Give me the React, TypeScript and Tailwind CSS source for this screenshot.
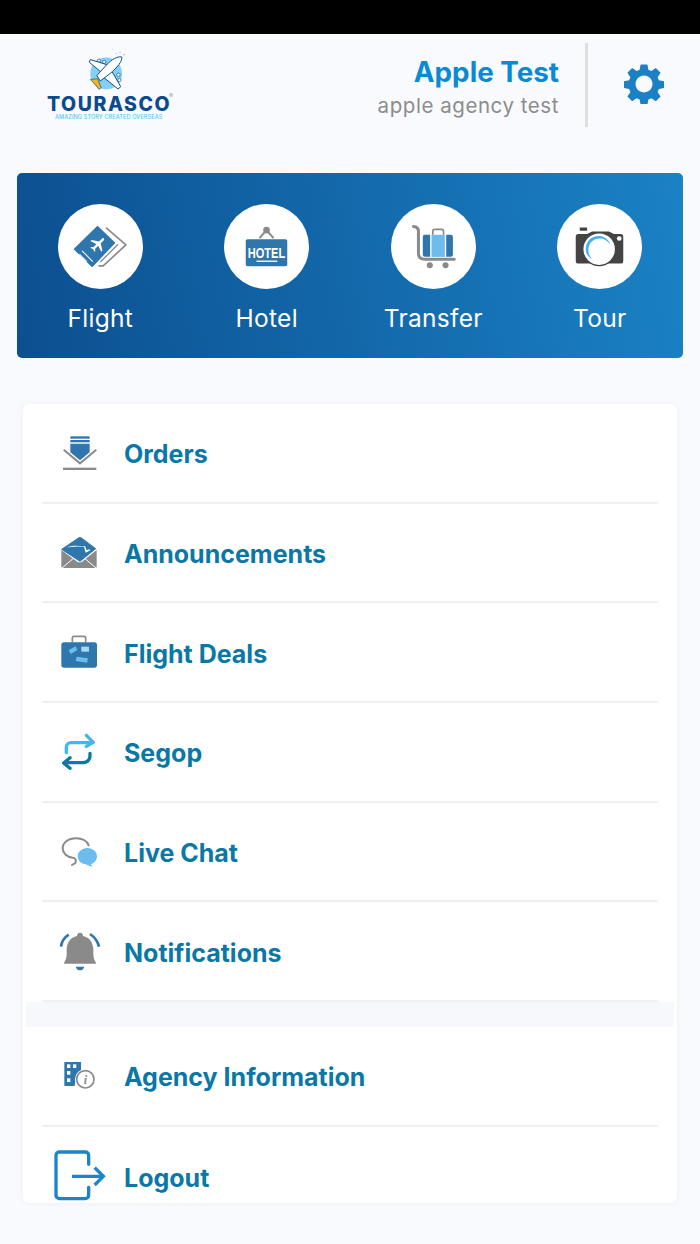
import React from "react";

const PLANE = "M21 16v-2l-8-5V3.5c0-.83-.67-1.5-1.5-1.5S10 2.67 10 3.5V9l-8 5v2l8-2.5V19l-2 1.5V22l3.5-1 3.5 1v-1.5L13 19v-5.5l8 2.5z";
const BLUE = "#2f76ad";
const GRAY = "#8a8a8a";
const SKY = "#6dbcee";

function Logo() {
  const n = "#0c4f8c";
  return (
    <div className="flex flex-col items-start w-[130px]">
      <svg viewBox="260 145 130 130" className="w-[43px] h-[43px] ml-[41px] mt-[14px]">
        <circle cx="318" cy="222" r="48" fill="#84cff6" />
        <g fill="#9db7c9">
          <circle cx="338" cy="150" r="1.5" /><circle cx="348" cy="162" r="2" /><circle cx="360" cy="158" r="2" /><circle cx="372" cy="165" r="2.5" /><circle cx="376" cy="150" r="1" />
        </g>
        <circle cx="296" cy="183" r="5" fill="#fff" stroke={n} strokeWidth="2" />
        <circle cx="312" cy="187" r="5" fill="#fff" stroke={n} strokeWidth="2" />
        <circle cx="355" cy="226" r="5" fill="#fff" stroke={n} strokeWidth="2" />
        <circle cx="358" cy="242" r="5" fill="#fff" stroke={n} strokeWidth="2" />
        <path d="M325 197L270 180l-3 8 38 32zM335 215l27 47-8 7-46-37z" fill="#fff" stroke={n} strokeWidth="3" strokeLinejoin="round" />
        <path d="M270 240l22-2 11 27-7 5-11-14z" fill="#f6b31a" stroke={n} strokeWidth="2" strokeLinejoin="round" />
        <path d="M365 172c-15-2-30 8-45 23l-30 33 10 17 30-23c20-17 38-37 35-50z" fill="#fff" stroke={n} strokeWidth="3" strokeLinejoin="round" />
      </svg>
      <div className="relative ml-[1px] mt-[5px] text-[19.5px] leading-[16px] font-extrabold tracking-[1.55px] text-[#0b4b8c]">
        TOURASCO
        <span className="absolute left-[122px] top-[-3px] text-[6px] leading-[6px] font-normal tracking-normal text-[#8fa5b8]">®</span>
      </div>
      <div className="ml-[9px] mt-[2px] text-[5.6px] leading-[7px] font-medium tracking-[0.08px] whitespace-nowrap text-[#5cc5f5]">AMAZING STORY CREATED OVERSEAS</div>
    </div>
  );
}

function Gear() {
  return (
    <svg viewBox="0 0 40 40" className="w-[40px] h-[40px]">
      <path fillRule="evenodd" fill="#1b80c4" d="M16.6 0.5h6.8l1 5.2 3 1.3 4.4-3 4.8 4.8-3 4.4 1.3 3 5.2 1v6.8l-5.2 1-1.3 3 3 4.4-4.8 4.8-4.4-3-3 1.3-1 5.2h-6.8l-1-5.2-3-1.3-4.4 3-4.8-4.8 3-4.4-1.3-3-5.2-1v-6.8l5.2-1 1.3-3-3-4.4 4.8-4.8 4.4 3 3-1.3z M20 11.5a8.5 8.5 0 1 0 0.01 0z" />
    </svg>
  );
}

function FlightIcon() {
  return (
    <svg viewBox="0 0 254 254" className="absolute inset-0 w-full h-full">
      <path d="M145 72l58 50-68 63h-12" fill="none" stroke={GRAY} strokeWidth="5" strokeLinejoin="round" strokeLinecap="round" />
      <path d="M178 122l-50 50" fill="none" stroke={GRAY} strokeWidth="4" strokeLinecap="round" />
      <path d="M50 135l68-67 50 48-66 70z" fill={BLUE} stroke={BLUE} strokeWidth="5" strokeLinejoin="round" />
      <g transform="translate(120 120) rotate(45) scale(2.4) translate(-11.5 -12)"><path d={PLANE} fill="#fff" /></g>
      <path d="M72 140l32 32M64 150l22 22" stroke="#fff" strokeWidth="3" />
    </svg>
  );
}

function HotelIcon() {
  return (
    <svg viewBox="0 0 254 254" className="absolute inset-0 w-full h-full">
      <circle cx="127" cy="78" r="10" fill={GRAY} />
      <path d="M106 102l21-24 21 24" fill="none" stroke={GRAY} strokeWidth="6" />
      <rect x="65" y="105" width="124" height="81" rx="5" fill={BLUE} />
      <text x="127" y="162" textAnchor="middle" textLength="112" lengthAdjust="spacingAndGlyphs" fill="#fff" fontSize="41" fontWeight="700" fontFamily="Liberation Sans, sans-serif">HOTEL</text>
      <rect x="97" y="169" width="62" height="4" fill="#fff" />
    </svg>
  );
}

function TransferIcon() {
  return (
    <svg viewBox="0 0 254 254" className="absolute inset-0 w-full h-full">
      <path d="M125 92V82a6 6 0 0 1 6-6h20a6 6 0 0 1 6 6v10" fill="none" stroke={GRAY} strokeWidth="5" />
      <path d="M67 67c10 0 15 6 15 15v65c0 12 6 18 18 18h89" fill="none" stroke={GRAY} strokeWidth="9" strokeLinecap="round" />
      <path d="M95 98a6 6 0 0 1 6-6h16v66h-16a6 6 0 0 1-6-6zM185 98a6 6 0 0 0-6-6h-14v66h14a6 6 0 0 0 6-6z" fill={BLUE} />
      <rect x="121" y="92" width="40" height="66" fill={SKY} />
      <circle cx="116" cy="183" r="9" fill={GRAY} />
      <circle cx="163" cy="183" r="9" fill={GRAY} />
    </svg>
  );
}

function TourIcon() {
  return (
    <svg viewBox="0 0 254 254" className="absolute inset-0 w-full h-full">
      <rect x="68" y="70" width="22" height="10" rx="1" fill="#444" />
      <rect x="56" y="90" width="142" height="88" rx="8" fill="#444" />
      <path d="M90 90l15-8h50l15 8z" fill="#444" />
      <circle cx="126" cy="135" r="51" fill="#444" />
      <circle cx="126" cy="135" r="47" fill="#fff" />
      <path d="M86 135c0-28 24-44 48-38 12 3 22 13 25 23-8-10-18-16-28-17-20-2-36 12-37 32-1 12 4 22 12 30-12-6-20-16-20-30z" fill="#43b3f0" />
      <circle cx="186" cy="103" r="7" fill="#fff" />
    </svg>
  );
}

function Orders() {
  return (
    <svg viewBox="51 21 132 132" className="w-[44px] h-[44px]">
      <rect x="91" y="37" width="58" height="7" fill={BLUE} />
      <rect x="91" y="48" width="58" height="7" fill={BLUE} />
      <path d="M91 59h58v26l-29 24-29-24z" fill={BLUE} />
      <path d="M71 77l49 41 49-41" fill="none" stroke={GRAY} strokeWidth="6" />
      <rect x="69" y="131" width="100" height="7" fill={GRAY} />
    </svg>
  );
}

function Mail() {
  return (
    <svg viewBox="51 321 132 132" className="w-[44px] h-[44px]">
      <path d="M65 376l52-35h6l44 33-47 38z" fill={BLUE} stroke={BLUE} strokeWidth="3" strokeLinejoin="round" />
      <path d="M82 370c10-5 32-6 50-2l5 18 14-7-3-3-8 3-5-13z" fill="#fff" />
      <path d="M64 378l50 37h10l46-37v50a4 4 0 0 1-4 4H68a4 4 0 0 1-4-4z" fill={GRAY} />
      <path d="M66 432l33-28M168 432l-33-28" stroke="#fff" strokeWidth="3" />
    </svg>
  );
}

function Deals() {
  return (
    <svg viewBox="51 621 132 132" className="w-[44px] h-[44px]">
      <path d="M97 658v-13a5 5 0 0 1 5-5h30a5 5 0 0 1 5 5v13" fill="none" stroke={GRAY} strokeWidth="5" />
      <rect x="64" y="658" width="107" height="76" rx="8" fill={BLUE} />
      <path d="M86 682l20-12 6 11-20 12z" fill={SKY} />
      <rect x="124" y="671" width="23" height="15" fill="#a9d8f5" />
      <path d="M110 701l34 5-3 13-34-5z" fill={SKY} />
    </svg>
  );
}

function Segop() {
  return (
    <svg viewBox="51 18 132 132" className="w-[44px] h-[44px]" fill="none" strokeWidth="10" strokeLinecap="round" strokeLinejoin="round">
      <path d="M79 86V70a14 14 0 0 1 14-14h62" stroke="#3fb8ea" />
      <path d="M139 34l21 21-21 12" stroke="#3fb8ea" />
      <path d="M150 88v8a20 20 0 0 1-20 20H74" stroke="#0a79a8" />
      <path d="M90 101l-19 16 19 16" stroke="#0a79a8" />
    </svg>
  );
}

function Chat() {
  return (
    <svg viewBox="51 318 132 132" className="w-[44px] h-[44px]">
      <path d="M146 364c-6-14-20-21-38-21-24 0-40 14-40 30 0 14 12 26 30 28 8 1 12 6 8 16l-10 6" fill="none" stroke={GRAY} strokeWidth="6" strokeLinecap="round" />
      <path d="M142 372c17 0 29 11 29 25 0 12-9 21-19 24l6 6c-9 1-16-3-20-6-14-1-25-11-25-24 0-14 13-25 29-25z" fill={SKY} />
    </svg>
  );
}

function Bell() {
  return (
    <svg viewBox="51 615 132 132" className="w-[44px] h-[44px]">
      <path d="M86 632Q66 645 63 668M150 630Q172 645 177 668" fill="none" stroke={BLUE} strokeWidth="8" />
      <path d="M120 626c6 0 9 5 9 10 20 4 31 20 31 42v14c0 10 4 16 9 27H71c5-11 9-17 9-27v-14c0-22 11-38 31-42 0-5 3-10 9-10z" fill={GRAY} />
      <path d="M107 728h26c-2 7-7 11-13 11s-11-4-13-11z" fill={BLUE} />
    </svg>
  );
}

function Agency() {
  return (
    <svg viewBox="171 198 132 132" className="w-[44px] h-[44px]">
      <path d="M193 222h50v28l-15 12-4 32h-31z" fill={BLUE} />
      <rect x="201" y="229" width="10" height="11" fill="#fff" />
      <rect x="219" y="229" width="10" height="11" fill="#fff" />
      <rect x="201" y="249" width="10" height="11" fill="#fff" />
      <rect x="201" y="271" width="10" height="11" fill="#fff" />
      <circle cx="256" cy="274" r="31" fill="#fff" />
      <circle cx="256" cy="274" r="26" fill="#fff" stroke={GRAY} strokeWidth="5" />
      <text x="256" y="288" textAnchor="middle" fontSize="36" fontStyle="italic" fontWeight="700" fill={GRAY} fontFamily="Liberation Serif, serif">i</text>
    </svg>
  );
}

function Logout() {
  return (
    <svg viewBox="147 474 180 180" className="w-[60px] h-[60px] overflow-visible" fill="none" stroke="#1d84cc" strokeWidth="10">
      <path d="M266 526v-27a10 10 0 0 0-10-10h-78a10 10 0 0 0-10 10v120a10 10 0 0 0 10 10h78a10 10 0 0 0 10-10v-24" strokeLinecap="round" />
      <path d="M216 562h92" />
      <path d="M284 536l26 26-26 26" />
    </svg>
  );
}

const tiles = [
  { label: "Flight", icon: <FlightIcon /> },
  { label: "Hotel", icon: <HotelIcon /> },
  { label: "Transfer", icon: <TransferIcon /> },
  { label: "Tour", icon: <TourIcon /> },
];

function Row({ icon, label, line = true }: { icon: React.ReactNode; label: string; line?: boolean }) {
  return (
    <div className={`h-[99.7px] mx-[19px] flex items-center gap-[8px] ${line ? "border-b-2 border-[#eff0f2]" : ""}`}>
      <div className="w-[74px] flex justify-center items-center shrink-0">{icon}</div>
      <span className="block pt-[4px] text-[25px] font-[650] leading-none text-[#0a78a6]">{label}</span>
    </div>
  );
}

export default function App() {
  return (
    <div className="w-[700px] h-[1244px] overflow-hidden bg-[#f9fafe] font-['Inter',sans-serif]">
      <div className="h-[34px] bg-black" />
      <header className="h-[139px] flex items-start">
        <div className="ml-[46px]"><Logo /></div>
        <div className="ml-auto mt-[9px] h-[84px] flex items-stretch">
          <div className="flex flex-col items-end pt-[13px]">
            <div className="text-[27.8px] leading-[32px] font-[650] text-[#0a8ad4]">Apple Test</div>
            <div className="text-[20.5px] leading-[26px] mt-[5px] tracking-[0.55px] text-[#8c8c8c]">apple agency test</div>
          </div>
          <div className="w-[3px] ml-[26px] bg-[#dedede]" />
          <div className="w-[112px] flex items-center justify-center pb-[2px]"><Gear /></div>
        </div>
      </header>
      <section className="mx-[17px] h-[185px] rounded-[5px] bg-[linear-gradient(80deg,#0c4f90_0%,#1a82c5_100%)] grid grid-cols-4">
        {tiles.map((t) => (
          <div key={t.label} className="flex flex-col items-center pt-[31px]">
            <div className="relative w-[85px] h-[85px] rounded-full bg-white">{t.icon}</div>
            <div className="mt-[14px] text-[24.5px] leading-[30px] tracking-[0.3px] text-white">{t.label}</div>
          </div>
        ))}
      </section>
      <main className="mt-[46px] mx-[23px] h-[799px] rounded-[6px] bg-white shadow-[0_0_6px_rgba(0,0,0,0.05)] overflow-hidden">
        <Row icon={<Orders />} label="Orders" />
        <Row icon={<Mail />} label="Announcements" />
        <Row icon={<Deals />} label="Flight Deals" />
        <Row icon={<Segop />} label="Segop" />
        <Row icon={<Chat />} label="Live Chat" />
        <Row icon={<Bell />} label="Notifications" />
        <div className="h-[25px] mx-[3px] bg-[#f7f8fb]" />
        <Row icon={<Agency />} label="Agency Information" />
        <Row icon={<Logout />} label="Logout" line={false} />
      </main>
    </div>
  );
}
